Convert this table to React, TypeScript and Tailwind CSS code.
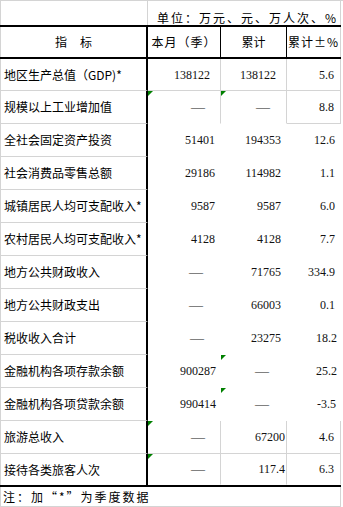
import React from "react";

const CJK = "font-['SimSun','Noto_Sans_CJK_SC',sans-serif]";
const NUM = "font-['Liberation_Serif','Times_New_Roman',serif]";

type Row = {
  label: string;
  v: [string, string, string];
  pad: [string, string, string];
  h: string;
  r?: [boolean, boolean, boolean];
  b?: [boolean, boolean, boolean];
  tri?: [boolean, boolean, boolean];
  last?: boolean;
};

const ROWS: Row[] = [
  { label: "地区生产总值（GDP)*", v: ["138122", "138122", "5.6"], pad: ["pr-[10px]", "pr-[10px]", "pr-[6px]"], h: "h-[32px]", r: [true, true, true], b: [true, true, true] },
  { label: "规模以上工业增加值", v: ["—", "—", "8.8"], pad: ["pr-[15px]", "pr-[16px]", "pr-[6px]"], h: "h-[33px]", r: [true, true, true], b: [false, false, true], tri: [true, true, false] },
  { label: "全社会固定资产投资", v: ["51401", "194353", "12.6"], pad: ["pr-[5px]", "pr-[5px]", "pr-[5px]"], h: "h-[33px]" },
  { label: "社会消费品零售总额", v: ["29186", "114982", "1.1"], pad: ["pr-[5px]", "pr-[5px]", "pr-[5px]"], h: "h-[33px]" },
  { label: "城镇居民人均可支配收入*", v: ["9587", "9587", "6.0"], pad: ["pr-[5px]", "pr-[5px]", "pr-[5px]"], h: "h-[33px]" },
  { label: "农村居民人均可支配收入*", v: ["4128", "4128", "7.7"], pad: ["pr-[5px]", "pr-[5px]", "pr-[5px]"], h: "h-[33px]" },
  { label: "地方公共财政收入", v: ["—", "71765", "334.9"], pad: ["pr-[17px]", "pr-[5px]", "pr-[5px]"], h: "h-[33px]" },
  { label: "地方公共财政支出", v: ["—", "66003", "0.1"], pad: ["pr-[17px]", "pr-[5px]", "pr-[5px]"], h: "h-[33px]" },
  { label: "税收收入合计", v: ["—", "23275", "18.2"], pad: ["pr-[16px]", "pr-[5px]", "pr-[3px]"], h: "h-[33px]" },
  { label: "金融机构各项存款余额", v: ["900287", "—", "25.2"], pad: ["pr-[4px]", "pr-[17px]", "pr-[3px]"], h: "h-[33px]", tri: [false, true, false] },
  { label: "金融机构各项贷款余额", v: ["990414", "—", "-3.5"], pad: ["pr-[4px]", "pr-[17px]", "pr-[4px]"], h: "h-[33px]", tri: [false, true, false] },
  { label: "旅游总收入", v: ["—", "67200", "4.6"], pad: ["pr-[15px]", "pr-[1px]", "pr-[6px]"], h: "h-[33px]", r: [true, true, true], b: [true, true, true], tri: [true, false, false] },
  { label: "接待各类旅客人次", v: ["—", "117.4", "6.3"], pad: ["pr-[15px]", "pr-[1px]", "pr-[6px]"], h: "h-[31px]", r: [true, true, true], b: [false, false, false], tri: [true, false, false], last: true },
];

const WIDTHS = ["w-[73px]", "w-[66px]", "w-[54px]"];

function Tri() {
  return (
    <span className="absolute left-0 top-0 h-0 w-0 border-r-[5px] border-t-[5px] border-r-transparent border-t-[#008000]" />
  );
}

function DataRow({ row }: { row: Row }) {
  return (
    <div className={`flex ${row.h}`}>
      <div
        className={`flex w-[148px] items-center border-l border-r-2 border-l-[#d4d4d4] border-r-black pl-[3px] text-[12px] text-black ${CJK} ${
          row.last ? "" : "border-b border-b-[#d4d4d4]"
        }`}
      >
        <span className="whitespace-nowrap">{row.label}</span>
      </div>
      {row.v.map((val, i) => (
        <div
          key={i}
          className={`relative flex items-center justify-end border-b border-r ${WIDTHS[i]} ${row.pad[i]} ${
            row.r?.[i] ? "border-r-[#d4d4d4]" : "border-r-transparent"
          } ${row.b?.[i] ? "border-b-[#d4d4d4]" : "border-b-transparent"} ${NUM} ${
            val === "—" ? "text-[14px]" : "text-[12px]"
          } text-[#111]`}
        >
          {row.tri?.[i] && <Tri />}
          {val}
        </div>
      ))}
    </div>
  );
}

export default function App() {
  return (
    <div className="h-[507px] w-[343px] overflow-hidden bg-white">
      {/* unit line */}
      <div className="flex h-[25px] border-t border-[#d4d4d4]">
        <div className="w-[148px] border-l border-r border-[#d4d4d4]" />
        <div
          className={`flex w-[193px] items-end border-r border-[#d4d4d4] pb-[1px] pl-[9px] text-[12px] leading-none tracking-[2px] text-black ${CJK}`}
        >
          单位：万元、元、万人次、%
        </div>
      </div>
      <div className="h-[2px] w-[341px] bg-black" />

      {/* header */}
      <div className={`flex h-[30px] text-[12px] text-black ${CJK}`}>
        <div className="flex w-[148px] items-center justify-center gap-[13px] border-l border-r-2 border-l-[#d4d4d4] border-r-black">
          <span>指</span>
          <span>标</span>
        </div>
        <div className="flex w-[73px] items-center justify-center border-r border-black tracking-[1px]">
          本月（季）
        </div>
        <div className="flex w-[66px] items-center justify-center border-r border-black">
          累计
        </div>
        <div className="flex w-[54px] items-center justify-center border-r border-[#d4d4d4] tracking-[1px]">
          累计±%
        </div>
      </div>
      <div className="h-[2px] w-[341px] bg-black" />

      {ROWS.map((row) => (
        <DataRow key={row.label} row={row} />
      ))}

      <div className="h-[2px] w-[341px] bg-black" />
      <div
        className={`flex h-[20px] w-[341px] items-center border-b border-l border-r border-[#d4d4d4] pl-[2px] text-[12px] tracking-[2px] text-black ${CJK}`}
      >
        注：加“*”为季度数据
      </div>
    </div>
  );
}
